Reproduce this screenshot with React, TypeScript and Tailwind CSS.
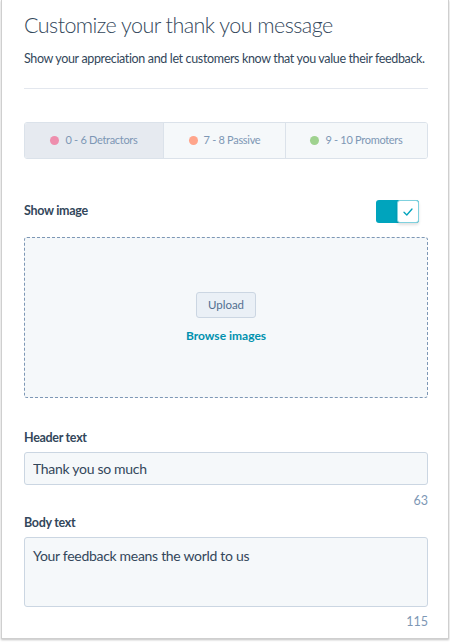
import React, { useState } from 'react';

const tabs = [
  { label: '0 - 6 Detractors', dot: 'bg-[#ee8ead]' },
  { label: '7 - 8 Passive', dot: 'bg-[#ffa58b]' },
  { label: '9 - 10 Promoters', dot: 'bg-[#9fd28f]' },
];

const App = () => {
  const [active, setActive] = useState(0);
  const [showImage, setShowImage] = useState(true);
  const [header, setHeader] = useState('Thank you so much');
  const [body, setBody] = useState('Your feedback means the world to us');

  return (
    <div className="w-[450px] h-[642px] bg-white font-['Lato',sans-serif] text-[#33475b]">
      <div className="w-[448px] h-[639px] ml-px bg-white border-x border-b border-[#cfcfcf] shadow-[0_1px_2px_rgba(0,0,0,0.25)] pl-[22px] pr-[20px]">
        {/* Header */}
        <h1 className="pt-[11px] text-[21.5px] leading-[28px] font-light tracking-[-0.55px]">Customize your thank you message</h1>
        <p className="mt-[11px] text-[12.5px] leading-[18px] tracking-[-0.35px] whitespace-nowrap">Show your appreciation and let customers know that you value their feedback.</p>
        <div className="mt-[20px] h-px bg-[#e3e7ee]"></div>

        {/* Score tabs */}
        <div className="mt-[33px] flex h-[37px] rounded-[3px] border border-[#dbe2ea] overflow-hidden">
          {tabs.map((t, i) => (
            <button
              key={t.label}
              onClick={() => setActive(i)}
              className={`flex items-center justify-center gap-[6px] text-[11px] tracking-[-0.3px] text-[#7d97b5] ${i === 0 ? 'w-[138px]' : i === 1 ? 'w-[122px] border-l border-[#dbe2ea]' : 'flex-1 border-l border-[#dbe2ea]'} ${active === i ? 'bg-[#e6eaf0]' : 'bg-[#f5f8fa]'}`}
            >
              <span className={`w-[9px] h-[9px] rounded-full ${t.dot}`}></span>
              {t.label}
            </button>
          ))}
        </div>

        {/* Show image */}
        <div className="mt-[41px] flex items-center justify-between">
          <span className="text-[12.5px] font-bold tracking-[-0.3px]">Show image</span>
          <button
            onClick={() => setShowImage(!showImage)}
            className="mr-[9px] flex h-[23px] w-[43px] rounded-[3px] bg-[#00a4bd]"
          >
            <span className="ml-auto flex h-[23px] w-[22px] items-center justify-center rounded-[3px] border border-[#7fd1de] bg-white shadow-[0_2px_3px_rgba(0,0,0,0.12)]">
              <svg width="10" height="8" viewBox="0 0 10 8" fill="none">
                <path d="M1 4.2 L3.8 7 L9 1" stroke="#00a4bd" strokeWidth="1.3" strokeLinecap="round" strokeLinejoin="round" />
              </svg>
            </span>
          </button>
        </div>

        {/* Upload area */}
        <div className="mt-[14px] h-[161px] rounded-[3px] border border-dashed border-[#7d97b5] bg-[#f5f8fa] flex flex-col items-center pt-[54px]">
          <button className="h-[26px] w-[60px] rounded-[3px] border border-[#cbd6e2] bg-[#eaf0f6] text-[11.5px] text-[#516f90]">Upload</button>
          <a className="mt-[9px] text-[12px] font-bold text-[#0091ae]">Browse images</a>
        </div>

        {/* Header text */}
        <label className="mt-[31px] block text-[12.5px] font-bold leading-[18px] tracking-[-0.3px]">Header text</label>
        <input
          value={header}
          onChange={(e) => setHeader(e.target.value)}
          className="mt-[5px] block h-[33px] w-full rounded-[3px] border border-[#cbd6e2] bg-[#f5f8fa] px-[8px] text-[14px] tracking-[-0.3px] text-[#33475b] outline-none"
        />
        <div className="mt-[8px] text-right text-[12.5px] leading-[16px] text-[#7d97b5]">{63}</div>

        {/* Body text */}
        <label className="mt-[5px] block text-[12.5px] font-bold leading-[18px] tracking-[-0.3px]">Body text</label>
        <textarea
          value={body}
          onChange={(e) => setBody(e.target.value)}
          className="mt-[5px] block h-[70px] w-full resize-none rounded-[3px] border border-[#cbd6e2] bg-[#f5f8fa] px-[8px] pt-[8px] pb-[6px] text-[14px] leading-[20px] tracking-[-0.3px] text-[#33475b] outline-none"
        />
        <div className="mt-[7px] text-right text-[12.5px] leading-[16px] text-[#7d97b5]">{115}</div>
      </div>
    </div>
  );
};

export default App;
